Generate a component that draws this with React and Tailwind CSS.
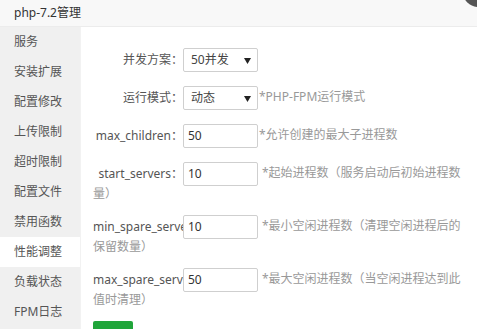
import React from "react";

const menu = ["服务","安装扩展","配置修改","上传限制","超时限制","配置文件","禁用函数","性能调整","负载状态","FPM日志"];

function Caret() {
  return (
    <svg width="7" height="6" viewBox="0 0 7 6" className="absolute right-[6px] top-[9px]">
      <polygon points="0,0 7,0 3.5,6" fill="#222" />
    </svg>
  );
}

function Select({ value }) {
  return (
    <span className="relative inline-block align-middle w-[75px] h-[24px] border border-[#cfcfcf] rounded-[2px] bg-white pl-[7px] leading-[22px] text-[#444]">
      {value}
      <Caret />
    </span>
  );
}

function Input({ value }) {
  return (
    <span className="inline-block align-middle w-[75px] h-[24px] border border-[#cfcfcf] rounded-[2px] bg-white pl-[4px] leading-[22px] text-[#333]">
      {value}
    </span>
  );
}

function Row({ label, children, hint, gap, two }) {
  return (
    <div className={`${two ? "mb-[13px]" : "mb-[14px]"} leading-[16px]`}>
      <span className="inline-block align-middle w-[90px] h-[24px] leading-[24px] text-right overflow-hidden whitespace-nowrap text-[#555]">
        {label}
      </span>
      {children}
      {hint && (
        <span className={`text-[#999] ${gap ? "ml-[4px]" : "ml-[1px]"}`}>{hint}</span>
      )}
    </div>
  );
}

export default function App() {
  return (
    <div className="relative w-[477px] h-[329px] overflow-hidden bg-white text-[12px] flex flex-col" style={{ fontFamily: '"Noto Sans", "Noto Sans CJK SC", sans-serif' }}>
      <div className="absolute left-[463px] top-[-23px] w-[30px] h-[30px] rounded-full bg-[#555]" />
      <div className="h-[27px] shrink-0 bg-[#f8f8f8] border-b border-[#ececec] pl-[14px] leading-[26px] text-[#333]">
        php-7.2管理
      </div>
      <div className="flex flex-1 min-h-0">
        <div className="w-[80px] shrink-0 bg-[#f0f0f0]">
          {menu.map((m) => (
            <div key={m} className={`h-[30px] leading-[30px] pl-[14px] text-[#555] ${m === "性能调整" ? "bg-white" : ""}`}>
              {m}
            </div>
          ))}
        </div>
        <div className="flex-1 border-l border-[#f2f2f2] pl-[12px] pr-[12px] pt-[21px]">
          <Row label="并发方案："><Select value="50并发" /></Row>
          <Row label="运行模式：" hint="*PHP-FPM运行模式"><Select value="动态" /></Row>
          <Row label="max_children：" hint="*允许创建的最大子进程数"><Input value="50" /></Row>
          <Row label="start_servers：" hint="*起始进程数（服务启动后初始进程数量）" gap two><Input value="10" /></Row>
          <Row label="min_spare_servers：" hint="*最小空闲进程数（清理空闲进程后的保留数量）" gap two><Input value="10" /></Row>
          <Row label="max_spare_servers：" hint="*最大空闲进程数（当空闲进程达到此值时清理）" gap two><Input value="50" /></Row>
          <button className="w-[40px] h-[30px] bg-[#20a53a] text-white rounded-[2px] text-[12px]">保存</button>
        </div>
      </div>
    </div>
  );
}
